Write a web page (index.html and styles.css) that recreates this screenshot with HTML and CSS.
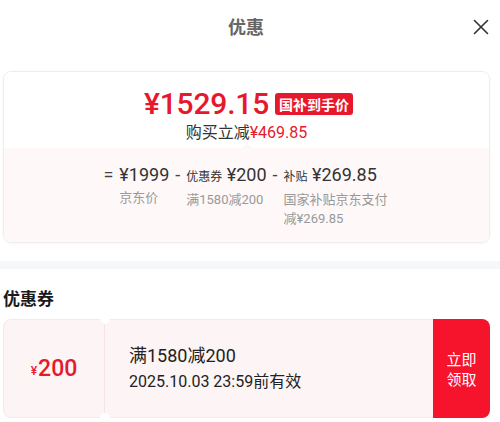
FILE: index.html
```html
<!DOCTYPE html>
<html lang="zh-CN">
<head>
  <meta charset="UTF-8">
  <meta name="viewport" content="width=device-width, initial-scale=1.0">
  <title>优惠</title>
  <link rel="stylesheet" href="styles.css">
</head>
<body>
  <header class="header">
    <span></span>
    <h1 class="title">优惠</h1>
    <button class="close" aria-label="关闭">
      <svg width="16" height="16" viewBox="0 0 16 16" fill="none" stroke="#333" stroke-width="1.6" stroke-linecap="round">
        <line x1="1.5" y1="1.5" x2="14.5" y2="14.5"></line>
        <line x1="14.5" y1="1.5" x2="1.5" y2="14.5"></line>
      </svg>
    </button>
  </header>

  <section class="wrap">
    <div class="price-card">
      <div class="price-top">
        <div class="price-line">
          <span class="price">¥1529.15</span>
          <span class="badge">国补到手价</span>
        </div>
        <div class="save">购买立减<span class="red">¥469.85</span></div>
      </div>
      <div class="price-detail">
        <span class="sep">=</span>
        <div class="term">
          <div class="val">¥1999</div>
          <div class="label">京东价</div>
        </div>
        <span class="sep">-</span>
        <div class="term">
          <div class="val"><small>优惠券</small> ¥200</div>
          <div class="label">满1580减200</div>
        </div>
        <span class="sep">-</span>
        <div class="term term-wide">
          <div class="val"><small>补贴</small> ¥269.85</div>
          <div class="label">国家补贴京东支付减¥269.85</div>
        </div>
      </div>
    </div>
  </section>

  <div class="band"></div>

  <section class="wrap">
    <h2 class="section-title">优惠券</h2>
    <div class="coupon">
      <div class="coupon-amount"><small>¥</small>200</div>
      <div class="coupon-info">
        <div class="coupon-name">满1580减200</div>
        <div class="coupon-date">2025.10.03 23:59前有效</div>
      </div>
      <button class="coupon-btn">立即<br>领取</button>
    </div>
  </section>
</body>
</html>
```

FILE: styles.css
```css
body {
  margin: 0;
  font-family: Roboto, "Noto Sans CJK SC", sans-serif;
  color: #333;
  background: #fff;
}
.header {
  height: 52px;
  display: grid;
  grid-template-columns: 1fr auto 1fr;
  align-items: center;
  padding: 0 11px 0 3px;
}
.title {
  margin: 0;
  font-size: 18px;
  font-weight: bold;
  color: #666;
  line-height: 24px;
  font-family: "Noto Sans CJK SC", sans-serif;
}
.close {
  justify-self: end;
  background: none;
  border: none;
  padding: 0;
  width: 16px;
  height: 16px;
  display: flex;
  cursor: pointer;
  margin-top: 2px;
}
.wrap {
  padding: 0 10px 0 3px;
}
.price-card {
  margin-top: 19px;
  border: 1px solid #f1ecec;
  border-radius: 8px;
  overflow: hidden;
  box-shadow: 0 1px 3px rgba(0, 0, 0, 0.04);
}
.price-top {
  position: relative;
  text-align: center;
  padding: 15px 0 5px;
  background: #fff;
}
.price-top::after {
  content: "";
  position: absolute;
  left: 50%;
  bottom: 0;
  margin-left: -5px;
  border: 5px solid transparent;
  border-bottom-color: #fef7f7;
  border-top: none;
}
.price-line {
  display: flex;
  justify-content: center;
  align-items: center;
  gap: 6px;
  height: 34px;
  padding-left: 4px;
}
.price {
  font-size: 30px;
  font-weight: 500;
  color: #e8182c;
  line-height: 34px;
  letter-spacing: -0.2px;
}
.badge {
  background: #e8182c;
  color: #fff;
  font-size: 14px;
  font-weight: bold;
  line-height: 22px;
  padding: 0 4px;
  border-radius: 3px;
  font-family: "Noto Sans CJK SC", sans-serif;
}
.save {
  margin-top: 2px;
  font-size: 16px;
  line-height: 20px;
  color: #333;
}
.red {
  color: #e8182c;
}
.price-detail {
  background: #fef8f8;
  display: flex;
  justify-content: center;
  align-items: flex-start;
  gap: 6px;
  padding: 17px 0 14px;
}
.sep {
  font-size: 18px;
  line-height: 20px;
  color: #444;
}
.val {
  font-size: 18px;
  line-height: 20px;
  color: #333;
  white-space: nowrap;
}
.val small {
  font-size: 12px;
}
.label {
  margin-top: 3px;
  font-size: 13px;
  line-height: 19px;
  color: #999;
}
.term-wide {
  max-width: 106px;
}
.band {
  height: 8px;
  margin-top: 18px;
  background: #f6f7fb;
}
.section-title {
  margin: 17px 0 0;
  font-size: 17px;
  font-weight: bold;
  line-height: 24px;
  color: #1a1a1a;
  font-family: "Noto Sans CJK SC", sans-serif;
}
.coupon {
  margin-top: 9px;
  height: 99px;
  display: flex;
  border: 1px solid #f8e8ea;
  border-radius: 8px;
  background: #fdf4f5;
  box-sizing: border-box;
}
.coupon-amount {
  position: relative;
  width: 100px;
  flex-shrink: 0;
  display: flex;
  align-items: center;
  justify-content: center;
  color: #e31b2d;
  font-size: 23px;
  font-weight: 500;
  border-right: 1px solid #f6e4e6;
}
.coupon-amount small {
  font-size: 12px;
  margin-top: 5px;
  margin-right: 1px;
}
.coupon-amount::before,
.coupon-amount::after {
  content: "";
  position: absolute;
  right: -6px;
  width: 10px;
  height: 10px;
  border-radius: 50%;
  background: #fff;
}
.coupon-amount::before {
  top: -6px;
}
.coupon-amount::after {
  bottom: -6px;
}
.coupon-info {
  flex: 1;
  display: flex;
  flex-direction: column;
  justify-content: center;
  padding-left: 24px;
  gap: 2px;
}
.coupon-name {
  font-size: 18px;
  line-height: 24px;
  color: #222;
}
.coupon-date {
  font-size: 16px;
  line-height: 24px;
  color: #222;
}
.coupon-btn {
  width: 57px;
  margin: -1px -1px -1px 0;
  border: none;
  background: #f5142b;
  color: #fff;
  font-size: 15px;
  line-height: 20px;
  border-radius: 0 8px 8px 0;
  font-family: "Noto Sans CJK SC", sans-serif;
  cursor: pointer;
  padding: 0;
}
```
